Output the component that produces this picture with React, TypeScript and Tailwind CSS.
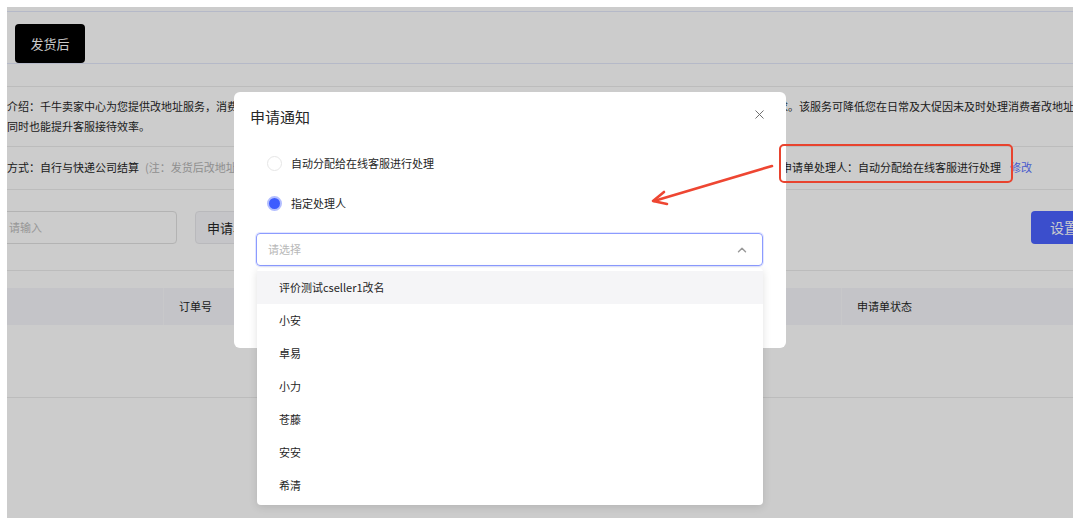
import { X, ChevronUp } from 'lucide-react';

const handlers = ['评价测试cseller1改名', '小安', '卓易', '小力', '苍藤', '安安', '希清'];

function Radio({ checked, label }: { checked?: boolean; label: string }) {
  return (
    <div className="flex h-[20px] items-center gap-[9px]">
      {checked ? (
        <span className="h-[15px] w-[15px] rounded-full border-2 border-[#b3beff] bg-[#3d5cff]" />
      ) : (
        <span className="h-[15px] w-[15px] rounded-full border border-[#e6e6e6] bg-white" />
      )}
      <span className="text-[11px] text-[#262626]">{label}</span>
    </div>
  );
}

export default function App() {
  return (
    <div className="relative h-[524px] w-[1080px] overflow-hidden bg-white pb-[6px] pl-[7px] pr-[7px] pt-[7px] font-['Noto_Sans_CJK_SC',sans-serif] text-[#262626]">
      {/* page under the mask */}
      <div className="relative h-full w-full overflow-hidden bg-white">
        <div className="w-[1090px]">
          <div className="mt-[4px] border-t border-[#e3e8fb]" />
          <div className="border-b border-[#e3e8fb] pl-[8px] pt-[12px]">
            <div className="flex h-[39px] w-[70px] items-center justify-center rounded-[4px] bg-black text-[13px] text-white">
              发货后
            </div>
          </div>

          {/* intro */}
          <div className="mt-[22px] whitespace-nowrap border-t border-[#ebebeb] pb-[10px] pt-[9px] text-[11px] leading-[20px]">
            <p>
              介绍：千牛卖家中心为您提供改地址服务，消费者在发货后可在线提交申请修改订单的收货地址信息，商家可以在此页面统一查看并及时处理消费者的改地址诉求。该服务可降低您在日常及大促因未及时处理消费者改地址申请带来的纠纷与投诉，
            </p>
            <p>同时也能提升客服接待效率。</p>
          </div>

          {/* settle + handler */}
          <div className="flex whitespace-nowrap border-t border-[#ebebeb] pb-[12px] pt-[10px] text-[11px] leading-[20px]">
            <div className="w-[774px]">
              方式：自行与快递公司结算
              <span className="ml-[6px] text-[#b3b3b3]">(注：发货后改地址产生的费用由商家与快递公司自行结算)</span>
            </div>
            <div>申请单处理人：自动分配给在线客服进行处理</div>
            <div className="ml-[9px] text-[#5a72ff]">修改</div>
          </div>

          {/* search row */}
          <div className="flex items-center border-t border-[#ebebeb] pb-[26px] pt-[21px]">
            <div className="-ml-[12px] flex h-[33px] w-[182px] items-center rounded-[4px] border border-[#e0e0e0] pl-[13px] text-[11px] text-[#bdbdbd]">
              请输入
            </div>
            <div className="ml-[18px] flex h-[33px] w-[200px] items-center rounded-[4px] border border-[#e8e8ec] bg-[#f7f7fa] pl-[11px] text-[13px]">
              申请单状态
            </div>
            <button className="ml-auto flex h-[33px] w-[66px] items-center justify-center rounded-[4px] bg-[#4a62ff] text-[14px] text-white">
              设置
            </button>
          </div>

          {/* table */}
          <div className="border-t border-[#ebebeb] pt-[17px]">
            <div className="flex h-[37px] items-center bg-[#f5f6fa] text-[11px]">
              <div className="h-full w-[156px]" />
              <div className="flex h-full w-[678px] items-center border-l border-[#fbfbfd] pl-[15px]">订单号</div>
              <div className="flex h-full flex-1 items-center border-l border-[#fbfbfd] pl-[15px]">申请单状态</div>
            </div>
            <div className="h-[73px] border-b border-[#ebebeb]" />
          </div>
        </div>

        {/* mask */}
        <div className="absolute inset-0 bg-black/20" />
      </div>

      {/* dialog */}
      <div className="absolute left-[234px] top-[92px] h-[256px] w-[552px] rounded-[6px] bg-white">
        <div className="flex items-center justify-between pl-[16px] pr-[19px] pt-[14px]">
          <h2 className="text-[15px] leading-[22px] text-[#262626]">申请通知</h2>
          <X size={15} strokeWidth={1.5} className="-mt-[5px] text-[#666]" />
        </div>
        <div className="mt-[25px] flex flex-col gap-[20px] pl-[33px]">
          <Radio label="自动分配给在线客服进行处理" />
          <Radio checked label="指定处理人" />
        </div>
        <div className="ml-[22px] mr-[23px] mt-[20px] flex h-[33px] items-center justify-between rounded-[4px] border border-[#8c9bff] pl-[11px] pr-[13px] shadow-[0_0_0_1px_rgba(140,155,255,0.25)]">
          <span className="text-[11px] text-[#b8b8b8]">请选择</span>
          <ChevronUp size={14} strokeWidth={2.5} className="text-[#9a9a9a]" />
        </div>
      </div>

      {/* dropdown */}
      <div className="absolute left-[257px] top-[268px] w-[506px] rounded-[4px] bg-white py-[3px] shadow-[0_2px_8px_rgba(0,0,0,0.12)]">
        {handlers.map((name, i) => (
          <div
            key={name}
            className={`flex h-[33px] items-center pl-[22px] text-[11px] text-[#262626] ${i === 0 ? 'bg-[#f5f5f7]' : ''}`}
          >
            {name}
          </div>
        ))}
      </div>

      {/* annotation */}
      <div className="absolute left-[779px] top-[144px] h-[39px] w-[234px] rounded-[5px] border-2 border-[#e8432e]" />
      <svg className="absolute left-[640px] top-[150px]" width="140" height="62" viewBox="0 0 140 62" fill="none">
        <line x1="132" y1="16" x2="14" y2="51" stroke="#ee4632" strokeWidth="2.6" strokeLinecap="round" />
        <polyline points="24,42 13,51 27,54" stroke="#ee4632" strokeWidth="2.6" strokeLinecap="round" strokeLinejoin="round" />
      </svg>
    </div>
  );
}
